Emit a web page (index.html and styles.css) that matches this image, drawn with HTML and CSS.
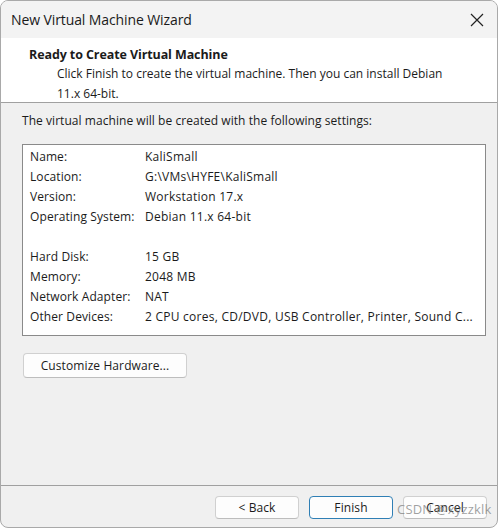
FILE: index.html
```html
<!DOCTYPE html>
<html>
<head>
<meta charset="utf-8">
<link rel="stylesheet" href="styles.css">
</head>
<body>
<div class="window">
  <div class="titlebar">
    <span class="title">New Virtual Machine Wizard</span>
    <svg class="close" width="14" height="14" viewBox="0 0 14 14"><path d="M1 1L13 13M13 1L1 13" stroke="#222" stroke-width="1.2" fill="none"/></svg>
  </div>
  <div class="header">
    <div class="h-title">Ready to Create Virtual Machine</div>
    <div class="h-desc">Click Finish to create the virtual machine. Then you can install Debian<br>11.x 64-bit.</div>
  </div>
  <div class="content">
    <div class="intro">The virtual machine will be created with the following settings:</div>
    <div class="listbox">
      <div class="row"><span class="k">Name:</span><span class="v">KaliSmall</span></div>
      <div class="row"><span class="k">Location:</span><span class="v">G:\VMs\HYFE\KaliSmall</span></div>
      <div class="row"><span class="k">Version:</span><span class="v">Workstation 17.x</span></div>
      <div class="row"><span class="k">Operating System:</span><span class="v">Debian 11.x 64-bit</span></div>
      <div class="row"></div>
      <div class="row"><span class="k">Hard Disk:</span><span class="v">15 GB</span></div>
      <div class="row"><span class="k">Memory:</span><span class="v">2048 MB</span></div>
      <div class="row"><span class="k">Network Adapter:</span><span class="v">NAT</span></div>
      <div class="row"><span class="k">Other Devices:</span><span class="v">2 CPU cores, CD/DVD, USB Controller, Printer, Sound C...</span></div>
    </div>
    <button class="btn custom">Customize Hardware...</button>
  </div>
  <div class="footer">
    <button class="btn fbtn">&lt; Back</button>
    <button class="btn fbtn primary">Finish</button>
    <button class="btn fbtn">Cancel</button>
    <span class="watermark">CSDN @xyzzklk</span>
  </div>
</div>
</body>
</html>
```
FILE: styles.css
```css
* { box-sizing: border-box; }
html, body { margin: 0; padding: 0; background: #ffffff; }
body {
  font-family: "Open Sans", "Noto Sans", sans-serif;
  font-size: 12px;
  color: #1b1b1b;
}
.window {
  position: relative;
  width: 498px;
  height: 528px;
  border: 1px solid #a9a9a9;
  border-radius: 8px;
  background: #f0f0f0;
  overflow: hidden;
  display: flex;
  flex-direction: column;
}
.titlebar {
  height: 37px;
  background: #f3f3f3;
  display: flex;
  align-items: center;
  justify-content: space-between;
  padding: 0 13px 0 10px;
}
.title { font-size: 14px; color: #1a1a1a; letter-spacing: -0.1px; }
.close { display: block; }
.header {
  height: 65px;
  background: #ffffff;
  border-bottom: 1px solid #a0a0a0;
  padding: 7px 0 0 28px;
}
.h-title { font-weight: 700; font-size: 12.5px; line-height: 19px; letter-spacing: -0.1px; }
.h-desc { padding-left: 28px; line-height: 20px; letter-spacing: 0; }
.content {
  flex: 1;
  padding: 8px 12px 0 21px;
  display: flex;
  flex-direction: column;
  align-items: flex-start;
}
.intro { line-height: 20px; letter-spacing: 0.05px; }
.listbox {
  margin-top: 13px;
  width: 464px;
  height: 192px;
  background: #ffffff;
  border: 1px solid #8a8a8a;
  padding: 2px 0 0 7px;
}
.row { height: 20px; line-height: 20px; display: flex; white-space: nowrap; }
.k { width: 115px; letter-spacing: 0.1px; }
.v { letter-spacing: 0.25px; }
.btn {
  font-family: inherit;
  font-size: 12px;
  color: #1b1b1b;
  background: #fdfdfd;
  border: 1px solid #d0d0d0;
  border-bottom-color: #bdbdbd;
  border-radius: 4px;
  padding: 0;
  letter-spacing: 0.1px;
}
.custom {
  margin-top: 17px;
  margin-left: 1px;
  width: 164px;
  height: 25px;
}
.footer {
  position: relative;
  height: 42px;
  border-top: 1px solid #a0a0a0;
  display: flex;
  justify-content: flex-end;
  align-items: flex-start;
  gap: 10px;
  padding: 10px 10px 0 0;
}
.fbtn { width: 84px; height: 23px; }
.primary { border: 1px solid #2f7fb5; }
.watermark {
  position: absolute;
  left: 396px;
  top: 14px;
  font-size: 13px;
  color: rgba(130, 130, 130, 0.75);
  letter-spacing: 0.2px;
  pointer-events: none;
}
```
